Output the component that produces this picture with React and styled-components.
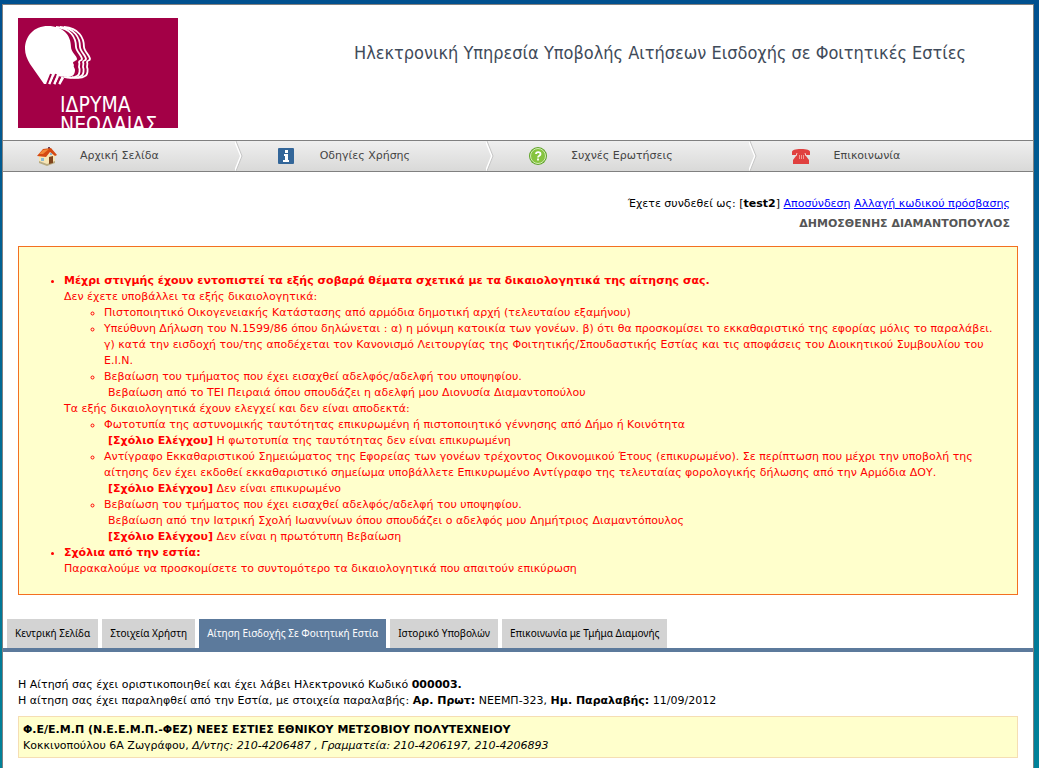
import React from 'react';
import styled, { createGlobalStyle } from 'styled-components';

const GlobalStyle = createGlobalStyle`
  html {
    min-height: 100%;
    background: linear-gradient(#00508f, #008299) no-repeat #008299;
  }

  body {
    margin: 0;
    font-family: 'DejaVu Sans', sans-serif;
    font-size: 11px;
    line-height: 16px;
    color: #000;
  }
`;

const Page = styled.div`
  box-sizing: border-box;
  min-height: calc(100vh - 4px);
  margin: 4px 5px 0 2px;
  border: 1px solid #808080;
  border-bottom: none;
  background: #fff;
`;

const Header = styled.header`
  display: flex;
  align-items: flex-start;
  padding: 13px 15px 12px;
`;

const LogoImage = styled.svg`
  display: block;
  flex: none;
`;

const Title = styled.h1`
  flex: 1;
  margin: 21px 0 0;
  padding-right: 52px;
  font-family: 'DejaVu Sans Condensed', sans-serif;
  font-weight: normal;
  font-size: 18px;
  line-height: 28px;
  text-align: right;
  color: #3f4b5a;
`;

const Nav = styled.nav`
  display: flex;
  height: 30px;
  border-top: 1px solid #808080;
  border-bottom: 1px solid #808080;
  background: linear-gradient(#efefef, #d9d9d8);
`;

const NavItem = styled.a`
  display: flex;
  align-items: center;
  gap: 23px;
  padding: 0 76px 0 34px;
  color: #444;
  text-decoration: none;
`;

const UserInfo = styled.div`
  padding: 22px 23px 0;
  line-height: 20px;
  text-align: right;

  a {
    color: #00f;
  }
`;

const UserName = styled.div`
  font-weight: bold;
  color: #555;
`;

const Warnings = styled.section`
  margin: 12px 15px 0;
  padding: 26px 15px 17px 5px;
  border: 1px solid #f37021;
  background: #ffffcc;
  color: #f00;

  ul {
    margin: 0;
    padding-left: 40px;
  }
`;

const Note = styled.div`
  padding-left: 4px;
`;

const Tabs = styled.nav`
  display: flex;
  gap: 4px;
  margin-top: 24px;
  padding: 0 4px;
  border-bottom: 4px solid #5c7a9c;
`;

const Tab = styled.a`
  padding: 0 8px;
  font-family: 'Noto Sans', sans-serif;
  font-size: 10px;
  line-height: 29px;
  text-decoration: none;
  background: ${props => (props.$active ? '#5c7a9c' : '#d3d3d3')};
  color: ${props => (props.$active ? '#fff' : '#000')};
`;

const Content = styled.main`
  padding: 25px 15px 10px;
`;

const Office = styled.address`
  margin-top: 7px;
  padding: 5px 4px 3px;
  border: 1px solid #f5deb3;
  background: #ffffcc;
  font-style: normal;
`;

const Face = ({ x }) => (
  <path
    transform={`translate(${x} 0)`}
    d="M34 9C49 10 54 20 54 29C54 33 60 38 60 41C60 43 57 42 57 44C58 46 57 47 57 49C58 51 58 57 55 58C51 61 46 60 42 59"
    fill="none"
    stroke="#fff"
    strokeWidth="1.8"
  />
);

const Logo = () => (
  <LogoImage width="160" height="110" viewBox="0 0 160 110" role="img" aria-label="Ίδρυμα Νεολαίας">
    <rect width="160" height="110" fill="#a30046" />
    <Face x={12} />
    <Face x={8} />
    <Face x={4} />
    <path
      d="M30 8C16 8 7 18 7 31C7 36 9 41 12 46L26 66L29 66L34 58L50 59C55 59 57 56 57 52C57 50 55 49 56 47L55 45C55 43 59 43 59 41C59 38 53 34 53 29C53 17 45 8 30 8Z"
      fill="#fff"
    />
    <path d="M31 66L35 57M36 66L40 58M41 66L45 59" stroke="#fff" strokeWidth="3" />
    <path d="M29 66L33 56M34 66L38 56M39 66L42 59" stroke="#a30046" strokeWidth="2" />
    <g fill="#fff" fontFamily="'DejaVu Sans Condensed', sans-serif" fontSize="21">
      <text x="42" y="94">ΙΔΡΥΜΑ</text>
      <text x="42" y="114">ΝΕΟΛΑΙΑΣ</text>
    </g>
  </LogoImage>
);

const HomeIcon = () => (
  <svg width="20" height="20" viewBox="0 0 20 20" aria-hidden="true">
    <path d="M11 1H13V5H11Z" fill="#68405a" />
    <path d="M2 9L7 6L18 9V16L10 19L2 16Z" fill="#f7e5b5" />
    <path d="M2 15L10 18L18 15V17L10 20L2 17Z" fill="#b8ab82" />
    <path d="M0 10L6 3L14 2L20 9L18 10L13 6L9 11Z" fill="#d54a12" />
    <path d="M2 8L6 4L12 3L6 8Z" fill="#f18838" />
    <path d="M12 11L16 10V17L12 18Z" fill="#80441d" />
    <path d="M4 12H7V15H4ZM13 7H15V9H13Z" fill="#8cbbd3" />
  </svg>
);

const InfoIcon = () => (
  <svg width="20" height="20" viewBox="0 0 20 20" aria-hidden="true">
    <rect x="1" y="2" width="16" height="16" rx="1" fill="#336699" />
    <path d="M8 4H11V7H8ZM7 8H11V14H12V16H6V14H8V10H7Z" fill="#fff" />
  </svg>
);

const HelpIcon = () => (
  <svg width="20" height="20" viewBox="0 0 20 20" aria-hidden="true">
    <circle cx="10" cy="10" r="9" fill="#5fa428" />
    <circle cx="10" cy="10" r="7.5" fill="#86c43f" stroke="#d5eeb5" />
    <path d="M8 8C8 5.5 12.5 5.5 12.5 8C12.5 10 10 9.5 10 11.5M10 12.5V14.5" fill="none" stroke="#fff" strokeWidth="1.8" />
  </svg>
);

const PhoneIcon = () => (
  <svg width="20" height="20" viewBox="0 0 20 20" aria-hidden="true">
    <path d="M1 9V6C1 4 4 3 10 3S19 4 19 6V9H14V7H6V9Z" fill="#e0403f" />
    <path d="M6 6H14L15 10L18 14V18H2V14L5 10Z" fill="#e0403f" />
    <path d="M6 7L5 10M14 7L15 10" stroke="#f6d2cf" />
    <path d="M8.5 9V13M10.5 9V13M12.5 9V13" stroke="#ef9a94" />
  </svg>
);

const Chevron = () => (
  <svg width="8" height="30" viewBox="0 0 8 30" aria-hidden="true">
    <path d="M0 0L6 15L0 30" fill="none" stroke="#fff" strokeWidth="2" />
    <path d="M1 0L7 15L1 30" fill="none" stroke="#c4c4c4" />
  </svg>
);

const links = [
  { label: 'Αρχική Σελίδα', Icon: HomeIcon },
  { label: 'Οδηγίες Χρήσης', Icon: InfoIcon },
  { label: 'Συχνές Ερωτήσεις', Icon: HelpIcon },
  { label: 'Επικοινωνία', Icon: PhoneIcon }
];

const tabs = [
  'Κεντρική Σελίδα',
  'Στοιχεία Χρήστη',
  'Αίτηση Εισδοχής Σε Φοιτητική Εστία',
  'Ιστορικό Υποβολών',
  'Επικοινωνία με Τμήμα Διαμονής'
];

const missing = [
  { text: 'Πιστοποιητικό Οικογενειακής Κατάστασης από αρμόδια δημοτική αρχή (τελευταίου εξαμήνου)' },
  { text: 'Υπεύθυνη Δήλωση του Ν.1599/86 όπου δηλώνεται : α) η μόνιμη κατοικία των γονέων. β) ότι θα προσκομίσει το εκκαθαριστικό της εφορίας μόλις το παραλάβει. γ) κατά την εισδοχή του/της αποδέχεται τον Κανονισμό Λειτουργίας της Φοιτητικής/Σπουδαστικής Εστίας και τις αποφάσεις του Διοικητικού Συμβουλίου του Ε.Ι.Ν.' },
  { text: 'Βεβαίωση του τμήματος που έχει εισαχθεί αδελφός/αδελφή του υποψηφίου.', detail: 'Βεβαίωση από το ΤΕΙ Πειραιά όπου σπουδάζει η αδελφή μου Διονυσία Διαμαντοπούλου' }
];

const rejected = [
  { text: 'Φωτοτυπία της αστυνομικής ταυτότητας επικυρωμένη ή πιστοποιητικό γέννησης από Δήμο ή Κοινότητα', comment: 'Η φωτοτυπία της ταυτότητας δεν είναι επικυρωμένη' },
  { text: 'Αντίγραφο Εκκαθαριστικού Σημειώματος της Εφορείας των γονέων τρέχοντος Οικονομικού Έτους (επικυρωμένο). Σε περίπτωση που μέχρι την υποβολή της αίτησης δεν έχει εκδοθεί εκκαθαριστικό σημείωμα υποβάλλετε Επικυρωμένο Αντίγραφο της τελευταίας φορολογικής δήλωσης από την Αρμόδια ΔΟΥ.', comment: 'Δεν είναι επικυρωμένο' },
  { text: 'Βεβαίωση του τμήματος που έχει εισαχθεί αδελφός/αδελφή του υποψηφίου.', detail: 'Βεβαίωση από την Ιατρική Σχολή Ιωαννίνων όπου σπουδάζει ο αδελφός μου Δημήτριος Διαμαντόπουλος', comment: 'Δεν είναι η πρωτότυπη Βεβαίωση' }
];

const Documents = ({ items }) => (
  <ul>
    {items.map(item => (
      <li key={item.text}>
        {item.text}
        {item.detail ? <Note>{item.detail}</Note> : null}
        {item.comment ? <Note><b>[Σχόλιο Ελέγχου]</b> {item.comment}</Note> : null}
      </li>
    ))}
  </ul>
);

const App = () => (
  <>
    <GlobalStyle />
    <Page>
      <Header>
        <Logo />
        <Title>Ηλεκτρονική Υπηρεσία Υποβολής Αιτήσεων Εισδοχής σε Φοιτητικές Εστίες</Title>
      </Header>

      <Nav>
        {links.map(({ label, Icon }, i) => (
          <React.Fragment key={label}>
            {i > 0 ? <Chevron /> : null}
            <NavItem href="#"><Icon />{label}</NavItem>
          </React.Fragment>
        ))}
      </Nav>

      <UserInfo>
        <div>
          Έχετε συνδεθεί ως: [<b>test2</b>] <a href="#">Αποσύνδεση</a> <a href="#">Αλλαγή κωδικού πρόσβασης</a>
        </div>
        <UserName>ΔΗΜΟΣΘΕΝΗΣ ΔΙΑΜΑΝΤΟΠΟΥΛΟΣ</UserName>
      </UserInfo>

      <Warnings>
        <ul>
          <li>
            <b>Μέχρι στιγμής έχουν εντοπιστεί τα εξής σοβαρά θέματα σχετικά με τα δικαιολογητικά της αίτησης σας.</b>
            <div>Δεν έχετε υποβάλλει τα εξής δικαιολογητικά:</div>
            <Documents items={missing} />
            <div>Τα εξής δικαιολογητικά έχουν ελεγχεί και δεν είναι αποδεκτά:</div>
            <Documents items={rejected} />
          </li>
          <li>
            <b>Σχόλια από την εστία:</b>
            <div>Παρακαλούμε να προσκομίσετε το συντομότερο τα δικαιολογητικά που απαιτούν επικύρωση</div>
          </li>
        </ul>
      </Warnings>

      <Tabs>
        {tabs.map((tab, i) => (
          <Tab key={tab} href="#" $active={i === 2}>{tab}</Tab>
        ))}
      </Tabs>

      <Content>
        <div>Η Αίτησή σας έχει οριστικοποιηθεί και έχει λάβει Ηλεκτρονικό Κωδικό <b>000003.</b></div>
        <div>
          Η αίτηση σας έχει παραληφθεί από την Εστία, με στοιχεία παραλαβής: <b>Αρ. Πρωτ:</b> ΝΕΕΜΠ-323, <b>Ημ. Παραλαβής:</b> 11/09/2012
        </div>
        <Office>
          <b>Φ.Ε/Ε.Μ.Π (Ν.Ε.Ε.Μ.Π.-ΦΕΖ) ΝΕΕΣ ΕΣΤΙΕΣ ΕΘΝΙΚΟΥ ΜΕΤΣΟΒΙΟΥ ΠΟΛΥΤΕΧΝΕΙΟΥ</b>
          <div>Κοκκινοπούλου 6Α Ζωγράφου, <i>Δ/ντης: 210-4206487 , Γραμματεία: 210-4206197, 210-4206893</i></div>
        </Office>
      </Content>
    </Page>
  </>
);

export default App;
